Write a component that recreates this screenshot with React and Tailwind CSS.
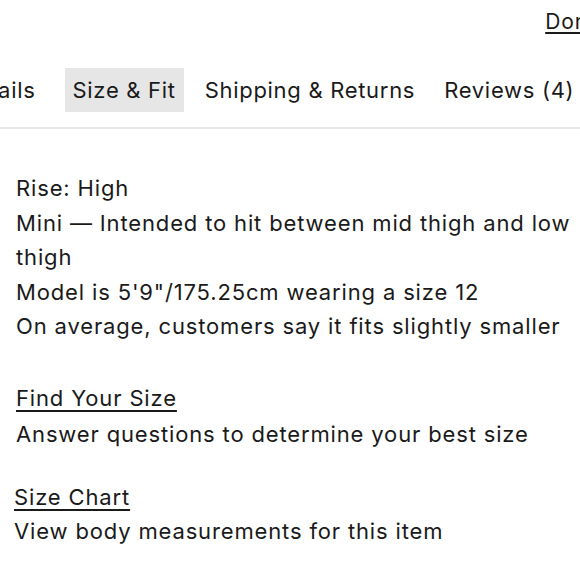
const tabs = [
  { label: 'Details', active: false },
  { label: 'Size & Fit', active: true },
  { label: 'Shipping & Returns', active: false },
  { label: 'Reviews (4)', active: false },
];

const fitNotes = [
  'Rise: High',
  'Mini — Intended to hit between mid thigh and low thigh',
  'Model is 5\'9"/175.25cm wearing a size 12',
  'On average, customers say it fits slightly smaller',
];

export default function App() {
  return (
    <div className="w-[580px] h-[580px] overflow-hidden bg-white text-[#1a1a1a] font-['Inter',sans-serif] tracking-[0.85px]">
      <div className="flex justify-end pt-[6px] h-[44px] whitespace-nowrap">
        <a href="#" className="text-[21px] underline underline-offset-[3px] -mr-[21px]">
          Done
        </a>
      </div>

      <div className="overflow-hidden border-b-2 border-[#e8e8e8]">
        <div className="flex items-center gap-[13px] -ml-[48px] pt-[24px] pb-[15px] whitespace-nowrap">
          {tabs.map((t, i) => (
            <button
              key={t.label}
              className={
                'px-[8px] h-[44px] text-[22px] tracking-[0.7px] ' +
                (t.active ? 'bg-[#e6e6e6]' : '') +
                (i === 0 ? ' mr-[8px]' : '')
              }
            >
              {t.label}
            </button>
          ))}
        </div>
      </div>

      <div className="pl-[16px] pr-[4px] pt-[42px] text-[22px] leading-[34.5px]">
        {fitNotes.map((n) => (
          <p key={n}>{n}</p>
        ))}

        <div className="mt-[37px]">
          <a href="#" className="underline underline-offset-[4px]">Find Your Size</a>
          <p className="mt-[2px]">Answer questions to determine your best size</p>
        </div>

        <div className="mt-[28px] -ml-[2px]">
          <a href="#" className="underline underline-offset-[4px]">Size Chart</a>
          <p>View body measurements for this item</p>
        </div>
      </div>
    </div>
  );
}
